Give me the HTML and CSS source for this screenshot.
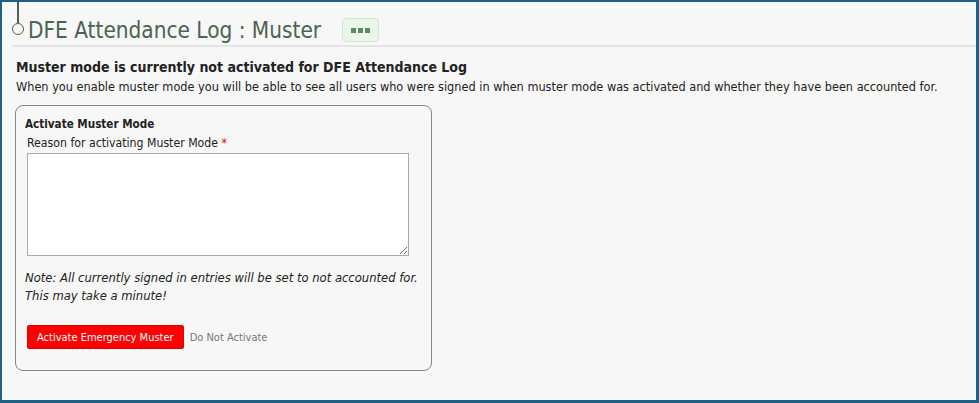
FILE: index.html
```html
<!DOCTYPE html>
<html>
  <head>
    <title>DFE Attendance Log : Muster</title>
    <link rel="stylesheet" href="styles.css">
  </head>
  <body>
    <div class="frame">
      <div class="page-head">
        <div class="timeline">
          <span class="stem"></span>
          <span class="node"></span>
        </div>
        <h1>DFE Attendance Log : Muster</h1>
        <button class="more-btn" type="button">
          <span class="dot"></span><span class="dot"></span><span class="dot"></span>
        </button>
      </div>

      <div class="content">
        <h2>Muster mode is currently not activated for DFE Attendance Log</h2>
        <p class="intro">When you enable muster mode you will be able to see all users who were signed in when muster mode was activated and whether they have been accounted for.</p>

        <div class="card">
          <h3>Activate Muster Mode</h3>
          <label class="field-label" for="reason">Reason for activating Muster Mode <span class="req">*</span></label>
          <textarea id="reason"></textarea>

          <p class="note">Note: All currently signed in entries will be set to not accounted for.<br>This may take a minute!</p>

          <div class="actions">
            <button class="btn-danger" type="button">Activate Emergency Muster</button>
            <a class="cancel" href="#">Do Not Activate</a>
          </div>
        </div>
      </div>
    </div>
  </body>
</html>
```

FILE: styles.css
```css
html, body {
  margin: 0;
  height: 100%;
}

body {
  font-family: "DejaVu Sans Condensed", "DejaVu Sans", sans-serif;
  background: #f7f7f7;
  color: #222;
}

.frame {
  box-sizing: border-box;
  height: 403px;
  border: 2px solid #1f6186;
  border-right-width: 3px;
  border-bottom-width: 3px;
  background: #f7f7f7;
}

.page-head {
  display: flex;
  align-items: flex-start;
  height: 43px;
  margin-left: 10px;
  border-bottom: 2px solid #e4e4e4;
}

.timeline {
  display: flex;
  flex-direction: column;
  align-items: center;
  width: 12px;
}

.stem {
  width: 2px;
  height: 21px;
  background: #4b6351;
}

.node {
  box-sizing: border-box;
  width: 12px;
  height: 12px;
  border: 1.5px solid #4b6351;
  border-radius: 50%;
}

h1 {
  margin: 14px 0 0 4px;
  font-size: 22.4px;
  font-weight: normal;
  color: #4b6351;
  line-height: 28px;
  white-space: nowrap;
}

.more-btn {
  display: flex;
  gap: 2px;
  align-items: center;
  justify-content: center;
  width: 37px;
  height: 24px;
  margin: 16px 0 0 21px;
  padding: 0;
  background: #e9f6e9;
  border: 1px solid #d4e6d4;
  border-radius: 4px;
}

.dot {
  width: 5px;
  height: 5px;
  background: #5d8a63;
}

.content {
  padding: 10px 14px 0 14px;
}

h2 {
  margin: 0;
  font-size: 14px;
  line-height: 20px;
  color: #222;
  white-space: nowrap;
}

.intro {
  margin: 1px 0 0 0;
  font-size: 12.6px;
  line-height: 17px;
  white-space: nowrap;
}

.card {
  box-sizing: border-box;
  width: 417px;
  height: 266px;
  margin: 10px 0 0 -1px;
  padding: 9px 12px 0 9px;
  border: 1px solid #888;
  border-radius: 8px;
}

h3 {
  margin: 0;
  font-size: 11.6px;
  line-height: 18px;
}

.field-label {
  display: block;
  margin: 2px 0 0 2px;
  font-size: 12.2px;
  line-height: 17px;
}

.req {
  color: #e00;
}

textarea {
  display: block;
  box-sizing: border-box;
  width: 382px;
  height: 103px;
  margin: 1px 0 0 2px;
  border: 1px solid #aaa;
  background: #fff;
}

.note {
  margin: 13px 0 0 0;
  font-size: 12.9px;
  font-style: italic;
  line-height: 18px;
  white-space: nowrap;
}

.actions {
  display: flex;
  align-items: center;
  gap: 6px;
  margin: 20px 0 0 2px;
}

.btn-danger {
  height: 24px;
  padding: 0 9px;
  background: #ff0000;
  color: #fff;
  border: 1px solid #d00;
  border-radius: 2px;
  font-family: inherit;
  font-size: 11px;
}

.cancel {
  color: #777;
  text-decoration: none;
  font-size: 11px;
}
```
